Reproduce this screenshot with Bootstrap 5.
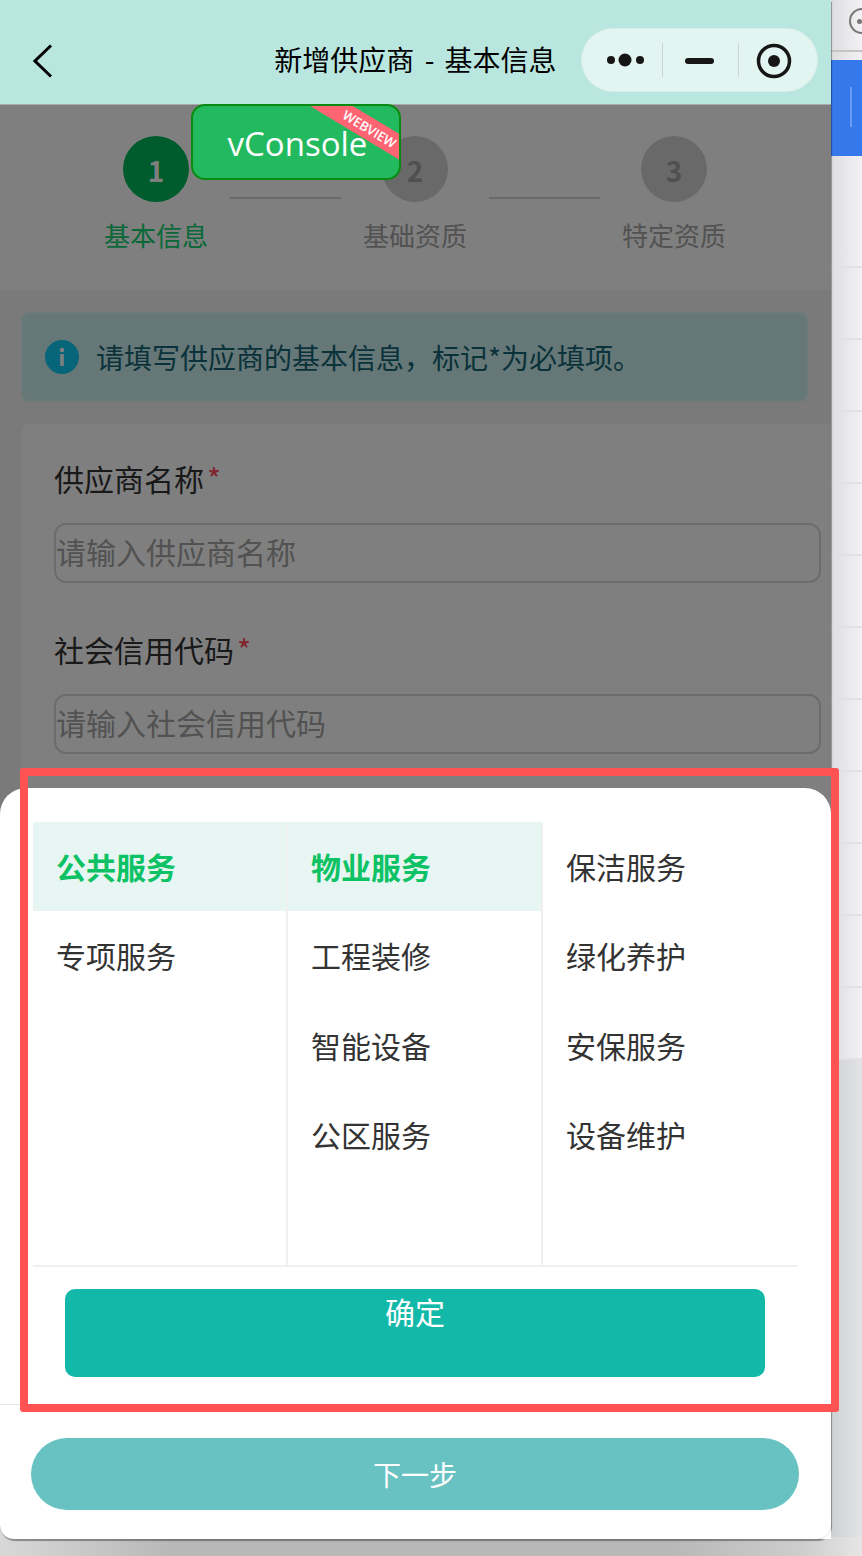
<!DOCTYPE html>
<html lang="zh-CN">
<head>
    <meta charset="UTF-8">
    <meta name="viewport" content="width=device-width, initial-scale=1.0">
    <title>新增供应商 - 基本信息</title>
    <link href="https://cdn.jsdelivr.net/npm/bootstrap@5.3.3/dist/css/bootstrap.min.css" rel="stylesheet">
    <style>
        html, body { height: 100%; }
        body {
            margin: 0;
            background: linear-gradient(to right, #d8d8d8 0, #b8b8b8 20%, #b8b8b8 78%, #cdcdcd 93%, #e6e6e6 100%);
            font-family: "Noto Sans CJK SC", "Liberation Sans", sans-serif;
            overflow: hidden;
        }
        .stage { height: 1556px; }

        /* phone frame */
        .phone {
            width: 831px;
            height: 1539px;
            flex: none;
            background: #f5f5f5;
            border-radius: 0 0 14px 14px;
            box-shadow: 1px 2px 1px rgba(0, 0, 0, .35);
            z-index: 1;
        }
        .topbar { height: 105px; flex: none; background: #b9e6df; border-bottom: 1px solid #aaa; }
        .back-btn { left: 33px; top: 44px; }
        .page-title { width: 100%; padding-top: 14px; font-size: 28px; line-height: 40px; word-spacing: 4px; color: #000; text-align: center; }
        .capsule {
            right: 13px;
            top: 28px;
            width: 237px;
            height: 64px;
            background: #e3f5f1;
            border: 1px solid #d9eeea;
            border-radius: 32px;
        }

        /* steps */
        .steps { height: 185px; flex: none; padding-right: 1px; background: #fff; }
        .step-col { width: 259px; }
        .step-dot {
            width: 66px;
            height: 66px;
            margin-top: 31px;
            padding-top: 2px;
            background: #d2d2d2;
            color: #a0a0a0;
            font-size: 28px;
            font-weight: 700;
        }
        .step-name { margin-top: 15px; font-size: 26px; line-height: 36px; color: #a4a4a4; }
        .step-on .step-dot { background: #00b85a; color: #fff; }
        .step-on .step-name { color: #10d070; }
        .step-line { width: 111px; height: 2px; top: 92px; background: #d2d2d2; }
        .line-a { left: 230px; }
        .line-b { left: 489px; }

        /* form */
        .tip-box {
            margin: 22px 23px 22px 21px;
            height: 90px;
            padding: 0 22px;
            gap: 17px;
            background: #cbeeee;
            border: 2px solid #d8f4f4;
            border-radius: 8px;
            color: #146474;
            font-size: 28px;
        }
        .tip-icon { width: 34px; height: 34px; flex: none; }
        .form-panel {
            margin-left: 22px;
            padding: 34px 10px 0 32px;
            background: #fff;
            border: 0;
            border-radius: 8px 0 0 8px;
            flex: 1;
        }
        .field-label { margin-bottom: 25px; font-size: 30px; line-height: 40px; color: #333; }
        .req { margin-left: 3px; color: #ff4d5a; }
        .field-input {
            height: 60px;
            padding: 0 0 4px;
            margin-bottom: 46px;
            border: 2px solid #d8d8dc;
            border-radius: 12px;
            font-size: 30px;
        }
        .field-input::placeholder { color: #a4a4a4; opacity: 1; }

        /* mask over the page, vConsole button */
        .mask-layer { left: 0; right: 0; top: 105px; bottom: 0; background: rgba(0, 0, 0, .5); border-radius: 0 0 14px 14px; }
        .vc-btn {
            left: 191px;
            top: 104px;
            width: 210px;
            height: 76px;
            background: #23b95f;
            border: 2px solid #0a8a10;
            border-radius: 14px;
            overflow: hidden;
            color: #fff;
            font-family: "Open Sans", sans-serif;
            font-size: 33px;
            z-index: 3;
        }
        .vc-text { margin-top: 3px; margin-left: 3px; }
        .vc-ribbon {
            left: 100px;
            top: 14px;
            width: 160px;
            height: 22px;
            padding-right: 8px;
            line-height: 22px;
            background: #ff6472;
            font-size: 13px;
            font-weight: 600;
            text-align: center;
            transform: rotate(31deg);
        }

        /* bottom sheet */
        .sheet {
            left: 0;
            right: 0;
            top: 788px;
            height: 617px;
            padding: 34px 33px 0;
            background: #fff;
            border-radius: 26px 26px 0 0;
            z-index: 2;
        }
        .picker { width: 765px; height: 445px; border-bottom: 2px solid #f0f0f0; }
        .picker-col { width: 255px; border-right: 2px solid #f0f0f0; }
        .picker-col:last-child { border-right: 0; }
        .picker-item { height: 89.3px; padding-left: 23px; font-size: 30px; color: #333; }
        .picker-item.picked { background: #e8f6f3; color: #0cc264; font-weight: 700; }
        .ok-btn {
            display: block;
            width: 700px;
            height: 88px;
            margin: 22px 0 0 32px;
            padding: 0 0 44px;
            background: #13b9a8;
            border: 0;
            border-radius: 10px;
            color: #fff;
            font-size: 30px;
            line-height: 44px;
            text-align: center;
        }
        .ok-btn:hover { background: #13b9a8; color: #fff; }
        .foot-bar {
            left: 0;
            right: 0;
            top: 1404px;
            bottom: 0;
            padding: 33px 32px 0 31px;
            background: #fff;
            border-top: 1px solid #e6e6e6;
            border-radius: 0 0 14px 14px;
            z-index: 2;
        }
        .next-btn {
            width: 100%;
            height: 72px;
            background: #67c2c1;
            border: 0;
            border-radius: 36px;
            color: #fff;
            font-size: 28px;
        }
        .next-btn:hover { background: #67c2c1; color: #fff; }

        /* red annotation */
        .mark-box {
            left: 20px;
            top: 768px;
            width: 819px;
            height: 644px;
            border: 8px solid #ff5252;
            border-radius: 3px;
            z-index: 4;
        }

        /* window behind the phone */
        .side { flex: 1; min-width: 0; background: linear-gradient(to right, #dedee0, #f2f2f4); }
        .side-top { height: 60px; }
        .side-top-in { height: 52px; border-bottom: 2px solid #c4c4c4; }
        .side-circle { left: 18px; top: 8px; width: 26px; height: 26px; border: 2px solid #777; border-radius: 50%; }
        .side-circle::after { content: ""; position: absolute; left: 6px; top: 9px; width: 5px; height: 5px; background: #777; border-radius: 50%; }
        .side-blue { height: 96px; background: #3478ec; }
        .side-blue-tick { left: 19px; top: 27px; width: 2px; height: 40px; background: #6a9cf2; }
        .side-gap { height: 112px; border-bottom: 2px solid #e2e2e4; }
        .side-row { height: 72px; border-bottom: 2px solid #e2e2e4; }
        .side-rest { height: 477px; background: linear-gradient(to right, #cfd0d2, #e2e3e6); }
    </style>
</head>
<body>
    <div class="stage d-flex align-items-start">
        <div class="phone position-relative d-flex flex-column">
            <div class="topbar position-relative d-flex align-items-center">
                <svg class="back-btn position-absolute" width="20" height="34" viewBox="0 0 20 34"><path d="M18 1.5 2 17l16 15.5" fill="none" stroke="#000" stroke-width="3"/></svg>
                <div class="page-title">新增供应商 - 基本信息</div>
                <div class="capsule position-absolute">
                    <svg class="d-block" width="235" height="62" viewBox="0 0 235 62">
                        <circle cx="29" cy="31" r="4" fill="#161616"/>
                        <circle cx="43" cy="31" r="6.5" fill="#161616"/>
                        <circle cx="58" cy="31" r="4" fill="#161616"/>
                        <rect x="80" y="14" width="1" height="34" fill="#c8d6d3"/>
                        <rect x="103" y="29" width="29" height="6" rx="3" fill="#161616"/>
                        <rect x="156" y="14" width="1" height="34" fill="#c8d6d3"/>
                        <circle cx="192" cy="32" r="15.5" fill="none" stroke="#161616" stroke-width="3.5"/>
                        <circle cx="192" cy="32" r="6" fill="#161616"/>
                    </svg>
                </div>
            </div>

            <div class="steps position-relative d-flex justify-content-center">
                <div class="step-col step-on d-flex flex-column align-items-center">
                    <div class="step-dot rounded-circle d-flex align-items-center justify-content-center">1</div>
                    <div class="step-name">基本信息</div>
                </div>
                <div class="step-col d-flex flex-column align-items-center">
                    <div class="step-dot rounded-circle d-flex align-items-center justify-content-center">2</div>
                    <div class="step-name">基础资质</div>
                </div>
                <div class="step-col d-flex flex-column align-items-center">
                    <div class="step-dot rounded-circle d-flex align-items-center justify-content-center">3</div>
                    <div class="step-name">特定资质</div>
                </div>
                <div class="step-line line-a position-absolute"></div>
                <div class="step-line line-b position-absolute"></div>
            </div>

            <div class="alert alert-info tip-box d-flex align-items-center">
                <svg class="tip-icon" viewBox="0 0 34 34">
                    <circle cx="17" cy="17" r="17" fill="#0dcaf0"/>
                    <rect x="15.2" y="14" width="3.6" height="12" fill="#fff"/>
                    <circle cx="17" cy="10" r="2.2" fill="#fff"/>
                </svg>
                <span>请填写供应商的基本信息，标记*为必填项。</span>
            </div>

            <div class="card form-panel">
                <div class="field-label">供应商名称<span class="req">*</span></div>
                <input type="text" class="form-control field-input" placeholder="请输入供应商名称">
                <div class="field-label">社会信用代码<span class="req">*</span></div>
                <input type="text" class="form-control field-input" placeholder="请输入社会信用代码">
            </div>

            <div class="mask-layer position-absolute"></div>

            <div class="vc-btn position-absolute d-flex align-items-center justify-content-center">
                <span class="vc-text">vConsole</span>
                <div class="vc-ribbon position-absolute">WEBVIEW</div>
            </div>

            <div class="sheet position-absolute">
                <div class="picker d-flex">
                    <div class="picker-col">
                        <div class="picker-item picked d-flex align-items-center">公共服务</div>
                        <div class="picker-item d-flex align-items-center">专项服务</div>
                    </div>
                    <div class="picker-col">
                        <div class="picker-item picked d-flex align-items-center">物业服务</div>
                        <div class="picker-item d-flex align-items-center">工程装修</div>
                        <div class="picker-item d-flex align-items-center">智能设备</div>
                        <div class="picker-item d-flex align-items-center">公区服务</div>
                    </div>
                    <div class="picker-col">
                        <div class="picker-item d-flex align-items-center">保洁服务</div>
                        <div class="picker-item d-flex align-items-center">绿化养护</div>
                        <div class="picker-item d-flex align-items-center">安保服务</div>
                        <div class="picker-item d-flex align-items-center">设备维护</div>
                    </div>
                </div>
                <button type="button" class="btn ok-btn">确定</button>
            </div>

            <div class="foot-bar position-absolute">
                <button type="button" class="btn next-btn">下一步</button>
            </div>

            <div class="mark-box position-absolute"></div>
        </div>

        <div class="side">
            <div class="side-top">
                <div class="side-top-in position-relative"><div class="side-circle position-absolute"></div></div>
            </div>
            <div class="side-blue position-relative"><div class="side-blue-tick position-absolute"></div></div>
            <div class="side-gap"></div>
            <div class="side-row"></div>
            <div class="side-row"></div>
            <div class="side-row"></div>
            <div class="side-row"></div>
            <div class="side-row"></div>
            <div class="side-row"></div>
            <div class="side-row"></div>
            <div class="side-row"></div>
            <div class="side-row"></div>
            <div class="side-row"></div>
            <div class="side-row"></div>
            <div class="side-rest"></div>
        </div>
    </div>

    <script src="https://cdn.jsdelivr.net/npm/bootstrap@5.3.3/dist/js/bootstrap.bundle.min.js"></script>
</body>
</html>
